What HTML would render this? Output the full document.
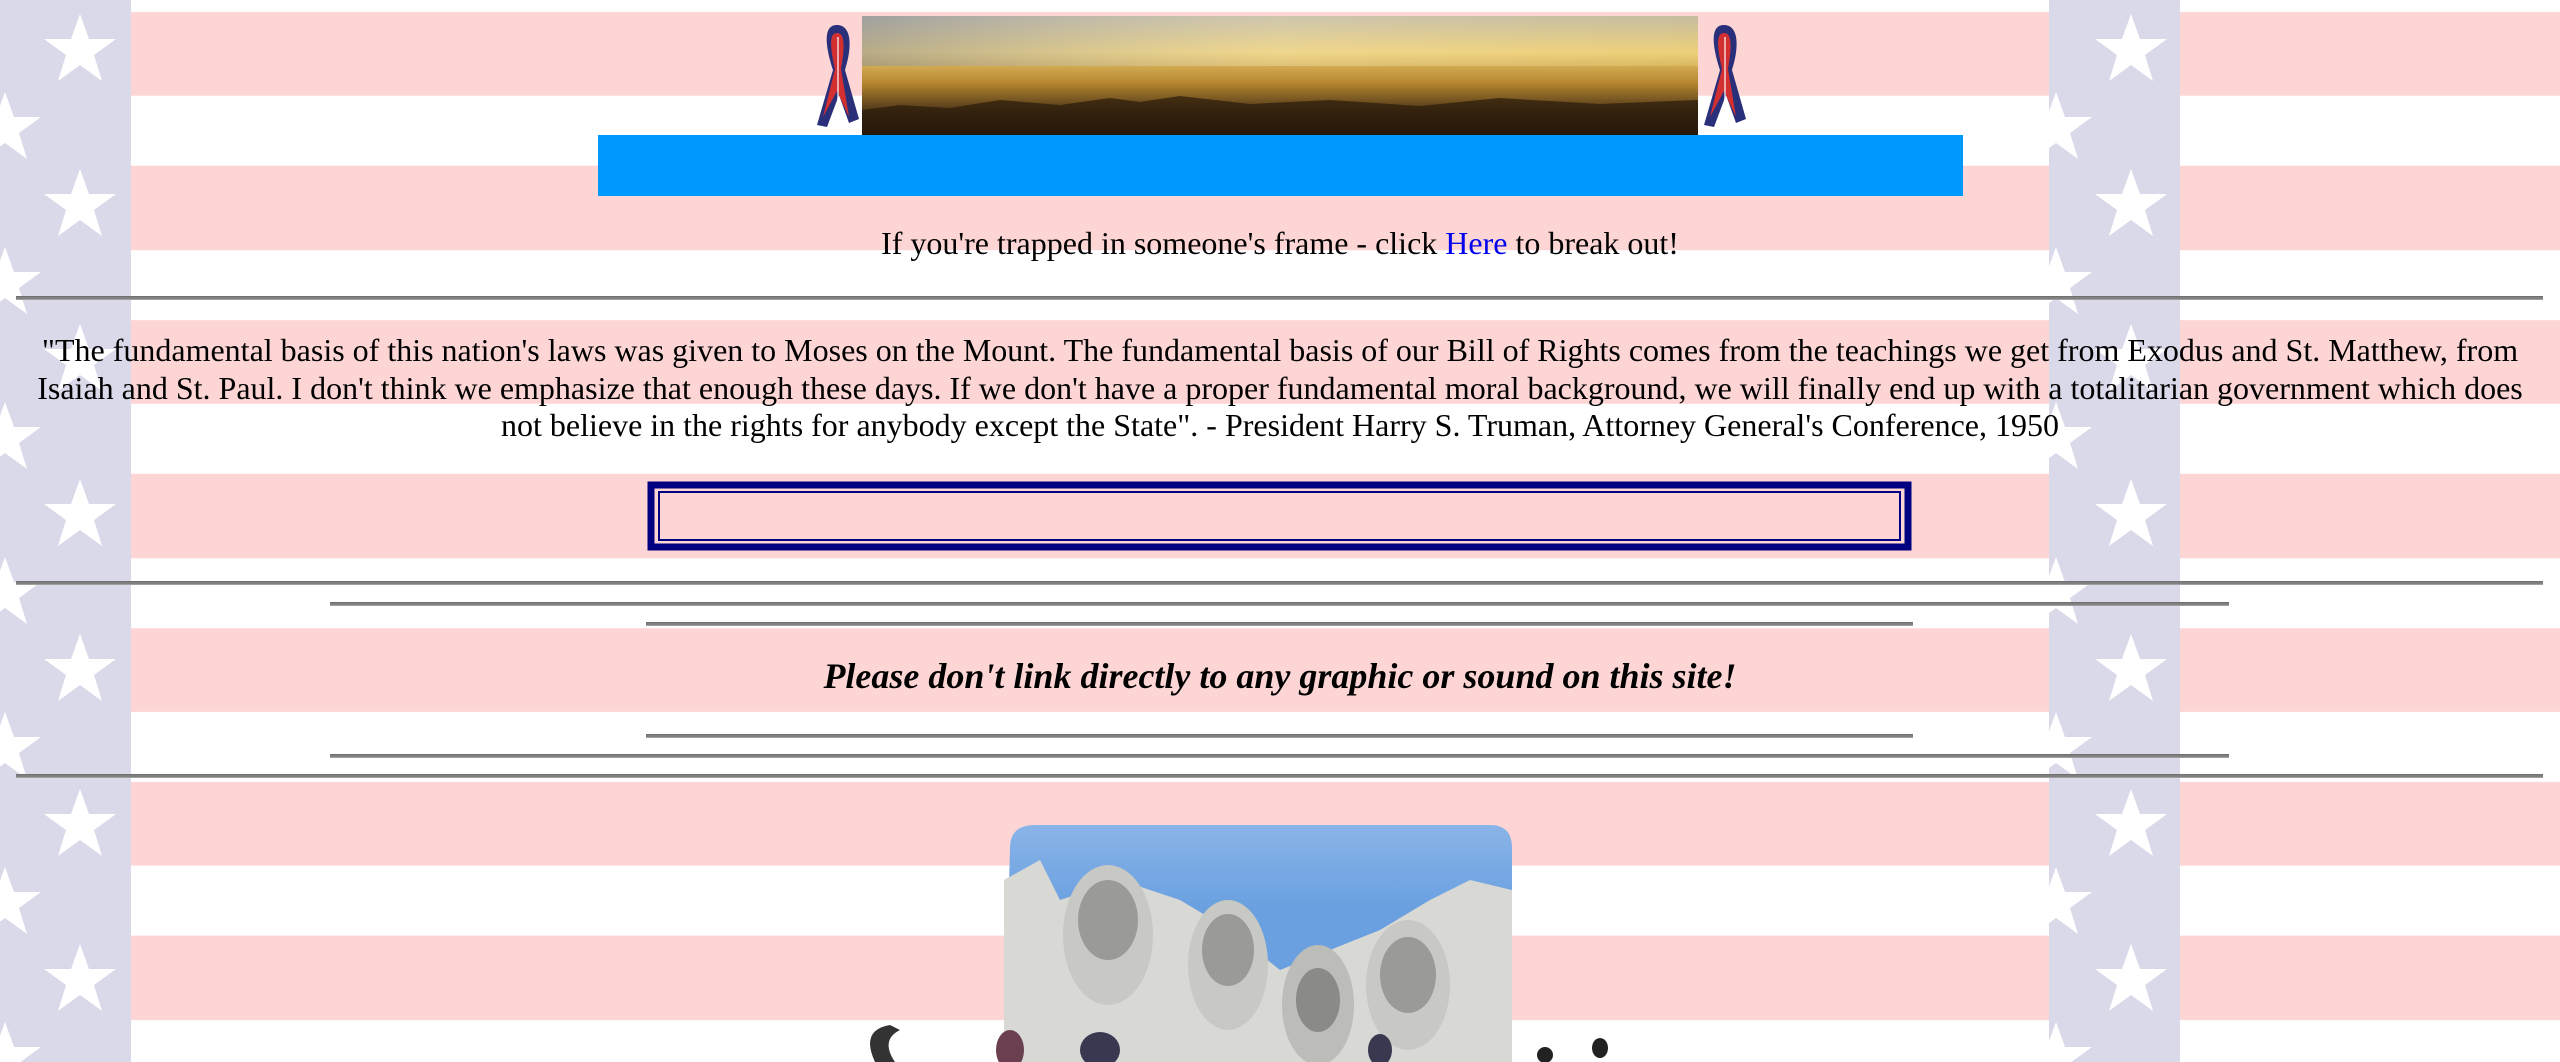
<!DOCTYPE html>
<html><head><meta charset="utf-8"><style>
html,body{margin:0;padding:0;}
body{width:2560px;height:1062px;overflow:hidden;position:relative;font-family:"Liberation Serif",serif;color:#000;
background:repeating-linear-gradient(180deg,#fdd5d5 0px,#fdd5d5 84px,#fff 84px,#fff 154px);background-position:0 12px;}
.abs{position:absolute;}
.hr{position:absolute;height:2px;background:#808080;border-top:1px solid #707070;border-bottom:1px solid #a0a0a0;}
.c{position:absolute;left:0;width:2560px;text-align:center;font-size:32px;}
</style></head><body>
<svg class="abs" style="left:0;top:0" width="2560" height="1062">
<defs><polygon id="st" points="0,-36 9,-11 36,-11 14,5 22,31 0,15 -22,31 -14,5 -36,-11 -9,-11" fill="#fff"/></defs>
<rect x="0" y="0" width="131" height="1062" fill="#d9d9ea"/>
<rect x="2049" y="0" width="131" height="1062" fill="#d9d9ea"/>
<g>
<use href="#st" x="80" y="50"/><use href="#st" x="80" y="205"/><use href="#st" x="80" y="360"/><use href="#st" x="80" y="515"/><use href="#st" x="80" y="670"/><use href="#st" x="80" y="825"/><use href="#st" x="80" y="980"/>
<use href="#st" x="5" y="128"/><use href="#st" x="5" y="283"/><use href="#st" x="5" y="438"/><use href="#st" x="5" y="593"/><use href="#st" x="5" y="748"/><use href="#st" x="5" y="903"/><use href="#st" x="5" y="1058"/>
<use href="#st" x="2131" y="50"/><use href="#st" x="2131" y="205"/><use href="#st" x="2131" y="360"/><use href="#st" x="2131" y="515"/><use href="#st" x="2131" y="670"/><use href="#st" x="2131" y="825"/><use href="#st" x="2131" y="980"/>
<use href="#st" x="2056" y="128"/><use href="#st" x="2056" y="283"/><use href="#st" x="2056" y="438"/><use href="#st" x="2056" y="593"/><use href="#st" x="2056" y="748"/><use href="#st" x="2056" y="903"/><use href="#st" x="2056" y="1058"/>
</g>
<g transform="translate(815,25)"><path d="M22,0 C8,0 10,20 18,45 L2,100 L12,102 L24,70 L34,98 L44,94 L30,45 C38,20 36,0 22,0Z" fill="#2a2f7a"/><path d="M22,8 C14,8 15,22 20,44 L8,92 L22,66 L34,92 L26,44 C30,22 30,8 22,8Z" fill="#d23030"/><path d="M22,12 L24,12 L24,90 L22,90Z" fill="#fff" opacity=".6"/></g>
<g transform="translate(1702,25)"><path d="M22,0 C8,0 10,20 18,45 L2,100 L12,102 L24,70 L34,98 L44,94 L30,45 C38,20 36,0 22,0Z" fill="#2a2f7a"/><path d="M22,8 C14,8 15,22 20,44 L8,92 L22,66 L34,92 L26,44 C30,22 30,8 22,8Z" fill="#d23030"/><path d="M22,12 L24,12 L24,90 L22,90Z" fill="#fff" opacity=".6"/></g>
<defs><linearGradient id="sky" x1="0" y1="0" x2="0" y2="1"><stop offset="0" stop-color="#b8b0a0"/><stop offset="0.3" stop-color="#e8c870"/><stop offset="0.55" stop-color="#b88830"/><stop offset="0.8" stop-color="#4a3418"/><stop offset="1" stop-color="#1a1008"/></linearGradient>
<linearGradient id="sk2" x1="0" y1="0" x2="1" y2="0"><stop offset="0" stop-color="#8890a0" stop-opacity=".5"/><stop offset="0.5" stop-color="#fff8d0" stop-opacity=".3"/><stop offset="1" stop-color="#fff0a0" stop-opacity=".2"/></linearGradient></defs>
<rect x="862" y="16" width="836" height="120" fill="url(#sky)"/>
<rect x="862" y="16" width="836" height="50" fill="url(#sk2)"/>
<path d="M862,110 L900,105 L950,108 L1000,100 L1060,105 L1110,98 L1140,102 L1180,96 L1250,104 L1330,100 L1420,106 L1500,98 L1600,104 L1698,100 L1698,136 L862,136Z" fill="#2a1a0a" opacity=".7"/>
<rect x="598" y="135" width="1365" height="61" fill="#0099ff"/>
<rect x="651" y="485" width="1257" height="62" fill="none" stroke="#000080" stroke-width="7"/>
<rect x="659" y="492" width="1241" height="48" fill="none" stroke="#000080" stroke-width="2"/>
<defs><linearGradient id="rb" x1="0" y1="0" x2="0" y2="1"><stop offset="0" stop-color="#8ab4e8"/><stop offset="0.35" stop-color="#6aa0e0"/></linearGradient></defs>
<path d="M1010,848 Q1010,825 1035,825 L1490,825 Q1512,825 1512,848 L1512,1062 L1004,1062Z" fill="url(#rb)"/>
<path d="M1004,880 L1040,860 L1060,900 L1120,880 L1180,900 L1230,930 L1280,970 L1330,950 L1380,930 L1430,900 L1470,880 L1512,890 L1512,1062 L1004,1062Z" fill="#d8d8d4"/>
<ellipse cx="1108" cy="935" rx="45" ry="70" fill="#c8c8c4"/><ellipse cx="1108" cy="920" rx="30" ry="40" fill="#9a9a96"/>
<ellipse cx="1228" cy="965" rx="40" ry="65" fill="#c8c8c4"/><ellipse cx="1228" cy="950" rx="26" ry="36" fill="#9a9a96"/>
<ellipse cx="1318" cy="1005" rx="36" ry="60" fill="#bcbcb8"/><ellipse cx="1318" cy="1000" rx="22" ry="32" fill="#8a8a86"/>
<ellipse cx="1408" cy="985" rx="42" ry="65" fill="#c8c8c4"/><ellipse cx="1408" cy="975" rx="28" ry="38" fill="#9a9a96"/>
<path d="M875,1062 Q860,1030 890,1025 L900,1030 Q880,1040 895,1062Z" fill="#333"/>
<ellipse cx="1010" cy="1050" rx="14" ry="20" fill="#6a4050"/><ellipse cx="1100" cy="1050" rx="20" ry="18" fill="#3a3850"/>
<ellipse cx="1380" cy="1050" rx="12" ry="16" fill="#3a3850"/><ellipse cx="1600" cy="1048" rx="8" ry="10" fill="#222"/><ellipse cx="1545" cy="1055" rx="8" ry="8" fill="#222"/>
</svg>
<div class="c" style="top:225px;">If you're trapped in someone's frame - click <span style="color:#0000ee">Here</span> to break out!</div>
<div class="hr" style="left:16px;width:2527px;top:296px;"></div>
<div class="c" style="top:332px;line-height:37.5px;left:20px;width:2520px;">"The fundamental basis of this nation's laws was given to Moses on the Mount. The fundamental basis of our Bill of Rights comes from the teachings we get from Exodus and St. Matthew, from Isaiah and St. Paul. I don't think we emphasize that enough these days. If we don't have a proper fundamental moral background, we will finally end up with a totalitarian government which does not believe in the rights for anybody except the State". - President Harry S. Truman, Attorney General's Conference, 1950</div>
<div class="hr" style="left:16px;width:2527px;top:581px;"></div>
<div class="hr" style="left:330px;width:1899px;top:602px;"></div>
<div class="hr" style="left:646px;width:1267px;top:622px;"></div>
<div class="c" style="top:655px;font-weight:bold;font-style:italic;font-size:36px;">Please don't link directly to any graphic or sound on this site!</div>
<div class="hr" style="left:646px;width:1267px;top:734px;"></div>
<div class="hr" style="left:330px;width:1899px;top:754px;"></div>
<div class="hr" style="left:16px;width:2527px;top:774px;"></div>
</body></html>
